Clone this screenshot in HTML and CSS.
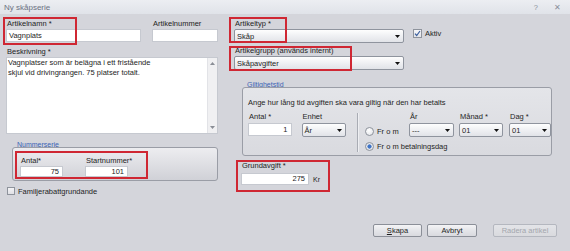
FILE: index.html
```html
<!DOCTYPE html>
<html lang="sv">
<head>
<meta charset="utf-8">
<title>Ny skåpserie</title>
<link rel="stylesheet" href="styles.css">
</head>
<body>
<div class="window">
  <div class="titlebar">
    <span class="title">Ny skåpserie</span>
    <span class="tb-btns"><span class="tb-help">?</span><span class="tb-close">✕</span></span>
  </div>
  <div class="content">
    <div class="cols">
      <div class="col-left">
        <div class="row-top">
          <div class="field f-name">
            <div class="lbl">Artikelnamn *</div>
            <div class="input">Vagnplats</div>
            <span class="mark m-name"></span>
          </div>
          <div class="field f-artnr">
            <div class="lbl">Artikelnummer</div>
            <div class="input"></div>
          </div>
        </div>
        <div class="field f-desc">
          <div class="lbl">Beskrivning *</div>
          <div class="textarea">
            <div class="ta-text">Vagnplatser som är belägna i ett fristående<br>skjul vid drivingrangen. 75 platser totalt.</div>
            <div class="vscroll">
              <svg width="5" height="3" viewBox="0 0 5 3"><path d="M0 3h5L2.5 0z" fill="#8a8e96"/></svg>
              <svg width="5" height="3" viewBox="0 0 5 3"><path d="M0 0h5L2.5 3z" fill="#8a8e96"/></svg>
            </div>
          </div>
        </div>
        <div class="group-wrap g-num">
          <div class="legend">Nummerserie</div>
          <div class="group-box num-box">
            <div class="field f-antal">
              <div class="lbl">Antal*</div>
              <div class="input num">75</div>
            </div>
            <div class="field f-start">
              <div class="lbl">Startnummer*</div>
              <div class="input num">101</div>
            </div>
            <span class="mark m-num"></span>
          </div>
        </div>
        <div class="check-row familj"><span class="cb"></span><span>Familjerabattgrundande</span></div>
      </div>

      <div class="col-right">
        <div class="row-typ">
          <div class="field f-typ">
            <div class="lbl">Artikeltyp *</div>
            <div class="select"><span>Skåp</span><svg width="5" height="3" viewBox="0 0 5 3"><path d="M0 0h5L2.5 3z" fill="#111"/></svg></div>
            <span class="mark m-typ"></span>
          </div>
          <div class="check-row aktiv"><span class="cb checked"><svg width="7" height="7" viewBox="0 0 7 7"><path d="M1 3.6l1.7 1.9L6 1" fill="none" stroke="#3b5f9e" stroke-width="1.2"/></svg></span><span>Aktiv</span></div>
        </div>
        <div class="field f-grupp">
          <div class="lbl">Artikelgrupp (används internt)</div>
          <div class="select"><span>Skåpavgifter</span><svg width="5" height="3" viewBox="0 0 5 3"><path d="M0 0h5L2.5 3z" fill="#111"/></svg></div>
          <span class="mark m-grupp"></span>
        </div>
        <div class="group-wrap g-gilt">
          <div class="legend">Giltighetstid</div>
          <div class="group-box gilt-box">
            <div class="gilt-info">Ange hur lång tid avgiften ska vara giltig när den har betalts</div>
            <div class="gilt-row">
              <div class="field f-gantal">
                <div class="lbl">Antal *</div>
                <div class="input num">1</div>
              </div>
              <div class="field f-enhet">
                <div class="lbl">Enhet</div>
                <div class="select"><span>År</span><svg width="5" height="3" viewBox="0 0 5 3"><path d="M0 0h5L2.5 3z" fill="#111"/></svg></div>
              </div>
              <div class="vsep"></div>
              <div class="date-grid">
                <div class="radio-row r1"><span class="radio"></span><span>Fr o m</span></div>
                <div class="field f-ar">
                  <div class="lbl">År</div>
                  <div class="select"><span>---</span><svg width="5" height="3" viewBox="0 0 5 3"><path d="M0 0h5L2.5 3z" fill="#111"/></svg></div>
                </div>
                <div class="field f-manad">
                  <div class="lbl">Månad *</div>
                  <div class="select"><span>01</span><svg width="5" height="3" viewBox="0 0 5 3"><path d="M0 0h5L2.5 3z" fill="#111"/></svg></div>
                </div>
                <div class="field f-dag">
                  <div class="lbl">Dag *</div>
                  <div class="select"><span>01</span><svg width="5" height="3" viewBox="0 0 5 3"><path d="M0 0h5L2.5 3z" fill="#111"/></svg></div>
                </div>
                <div class="radio-row r2"><span class="radio on"></span><span>Fr o m betalningsdag</span></div>
              </div>
            </div>
          </div>
        </div>
        <div class="field f-grund">
          <div class="lbl">Grundavgift *</div>
          <div class="grund-row"><div class="input num">275</div><span class="kr">Kr</span></div>
          <span class="mark m-grund"></span>
        </div>
      </div>
    </div>
    <div class="buttons">
      <div class="btn b-skapa"><u>S</u>kapa</div>
      <div class="btn b-avbryt">Avbryt</div>
      <div class="btn b-radera disabled">Radera artikel</div>
    </div>
  </div>
</div>
</body>
</html>
```

FILE: styles.css
```css
* { box-sizing: border-box; }
html, body { margin: 0; padding: 0; }
body {
  width: 570px;
  height: 251px;
  overflow: hidden;
  background: #d4d5db;
  font-family: "Liberation Sans", Arial, sans-serif;
  font-size: 7.5px;
  color: #1e1e1e;
}
.window {
  width: 570px;
  height: 251px;
  display: flex;
  flex-direction: column;
  background: #d4d5db;
}
.titlebar {
  height: 14px;
  flex: none;
  display: flex;
  align-items: center;
  justify-content: space-between;
  padding: 0 9px 0 4px;
  background: linear-gradient(#eceef2, #e0e3e9);
  color: #6c7282;
  font-size: 8px;
}
.tb-btns { display: flex; gap: 16px; color: #8a8f9a; font-size: 7.5px; }
.content {
  flex: 1;
  display: flex;
  flex-direction: column;
  padding: 5px 13px 14px 6px;
}
.cols { display: flex; gap: 16px; }
.col-left { width: 212px; display: flex; flex-direction: column; }
.col-right { width: 318px; display: flex; flex-direction: column; }

.field { position: relative; display: flex; flex-direction: column; }
.lbl { height: 10px; line-height: 10px; padding-left: 1px; white-space: nowrap; }
.input {
  height: 13px;
  background: #fff;
  border: 1px solid #c6c9d0;
  line-height: 11px;
  padding: 0 2px;
}
.input.num { text-align: right; padding-right: 3px; }

.mark {
  position: absolute;
  border: 2px solid #cf2733;
  pointer-events: none;
}

.row-top { display: flex; gap: 11px; }
.f-name { width: 135px; }
.f-artnr { width: 66px; }
.m-name { left: -3px; top: -2px; width: 74px; height: 28px; }

.f-desc { margin-top: 5px; }
.textarea {
  height: 77px;
  background: #fff;
  border: 1px solid #c6c9d0;
  display: flex;
  justify-content: space-between;
}
.ta-text { padding: 0 0 0 1px; line-height: 10px; }
.vscroll {
  width: 10px;
  background: #f0f0f2;
  border-left: 1px solid #e2e3e7;
  display: flex;
  flex-direction: column;
  justify-content: space-between;
  align-items: center;
  padding: 4px 0 4px;
}

.legend {
  height: 8px;
  line-height: 8px;
  font-size: 7px;
  color: #3b63b5;
  padding-left: 5px;
  white-space: nowrap;
}
.group-box {
  position: relative;
  border: 1px solid #9a9da6;
  border-radius: 3px;
  margin-top: -2px;
}

.g-num { margin-top: 7px; margin-left: 6px; width: 206px; }
.num-box {
  height: 34px;
  background: linear-gradient(#ededf0, #d0d1d7);
  display: flex;
  padding: 8px 0 0 7px;
  gap: 22px;
}
.f-antal { width: 43px; }
.f-start { width: 43px; }
.num-box .input { height: 11px; line-height: 9px; }
.m-num { left: 2px; top: 3px; width: 133px; height: 28px; }

.check-row { display: flex; align-items: center; gap: 3px; white-space: nowrap; }
.cb {
  width: 8px;
  height: 8px;
  border: 1px solid #8e939c;
  background: linear-gradient(#f4f4f6, #dfe0e5);
  display: flex;
  align-items: center;
  justify-content: center;
}
.familj { margin-top: 5px; margin-left: 1px; height: 10px; }

.row-typ { display: flex; }
.f-typ { width: 170px; }
.select {
  height: 14px;
  border: 1px solid #8f949e;
  border-radius: 2px;
  background: linear-gradient(#fefefe, #eff0f3 50%, #e1e3e8);
  display: flex;
  align-items: center;
  justify-content: space-between;
  padding: 0 3px 0 2px;
  white-space: nowrap;
}
.m-typ { left: -5px; top: -2px; width: 58px; height: 26px; }
.aktiv { margin-left: 9px; margin-top: 10px; height: 9px; align-self: flex-start; }
.aktiv .cb { width: 9px; height: 9px; background: linear-gradient(#f7f7f9, #e3e4e9); }

.f-grupp { width: 170px; margin-top: 3px; }
.m-grupp { left: -5px; top: 0; width: 123px; height: 25px; }

.g-gilt { margin-top: 11px; margin-left: 8px; width: 310px; }
.gilt-box {
  height: 69px;
  background: linear-gradient(#e4e5e9, #d9dadf);
  padding: 10px 0 0 5px;
}
.gilt-info { line-height: 10px; white-space: nowrap; }
.gilt-row { display: flex; margin-top: 4px; }
.f-gantal { width: 44px; }
.f-enhet { width: 45px; margin-left: 10px; }
.gilt-row .lbl { height: 11px; }
.vsep {
  width: 2px;
  height: 39px;
  margin: 1px 0 0 11px;
  border-left: 1px solid #a9acb4;
  border-right: 1px solid #eeeff2;
}
.date-grid {
  display: grid;
  grid-template-columns: 39px 45px 44px 43px;
  column-gap: 5px;
  margin-left: 6px;
}
.date-grid .f-dag { margin-left: 1px; }
.radio-row { display: flex; align-items: center; gap: 3px; white-space: nowrap; }
.r1 { align-self: end; height: 14px; }
.r2 { grid-column: 1 / 5; height: 10px; margin-top: 3px; }
.radio {
  width: 9px;
  height: 9px;
  border: 1px solid #8e939c;
  border-radius: 50%;
  background: radial-gradient(circle at 40% 35%, #ffffff, #dfe1e6);
  flex: none;
}
.radio.on { background: radial-gradient(circle, #3f74c6 0, #3f74c6 1.8px, #e9ebef 2.4px, #d7dae0 100%); }

.f-grund { margin-top: 5px; margin-left: 7px; width: 90px; }
.f-grund .lbl { height: 12px; }
.grund-row { display: flex; align-items: center; gap: 4px; }
.grund-row .input { width: 68px; height: 12px; line-height: 10px; }
.kr { font-size: 7px; }
.m-grund { left: -5px; top: -1px; width: 94px; height: 32px; }

.buttons {
  margin-top: auto;
  display: flex;
  justify-content: flex-end;
  gap: 5px;
}
.btn {
  height: 13px;
  line-height: 11px;
  text-align: center;
  border: 1px solid #8b8f98;
  border-radius: 2px;
  background: linear-gradient(#f4f4f6, #e4e5e9 50%, #d9dadf);
}
.b-skapa { width: 49px; }
.b-avbryt { width: 50px; }
.b-radera { width: 64px; margin-left: 11px; }
.btn.disabled { color: #a3a6ad; border-color: #b4b7bf; background: linear-gradient(#e3e4e8, #d9dade); }
```
